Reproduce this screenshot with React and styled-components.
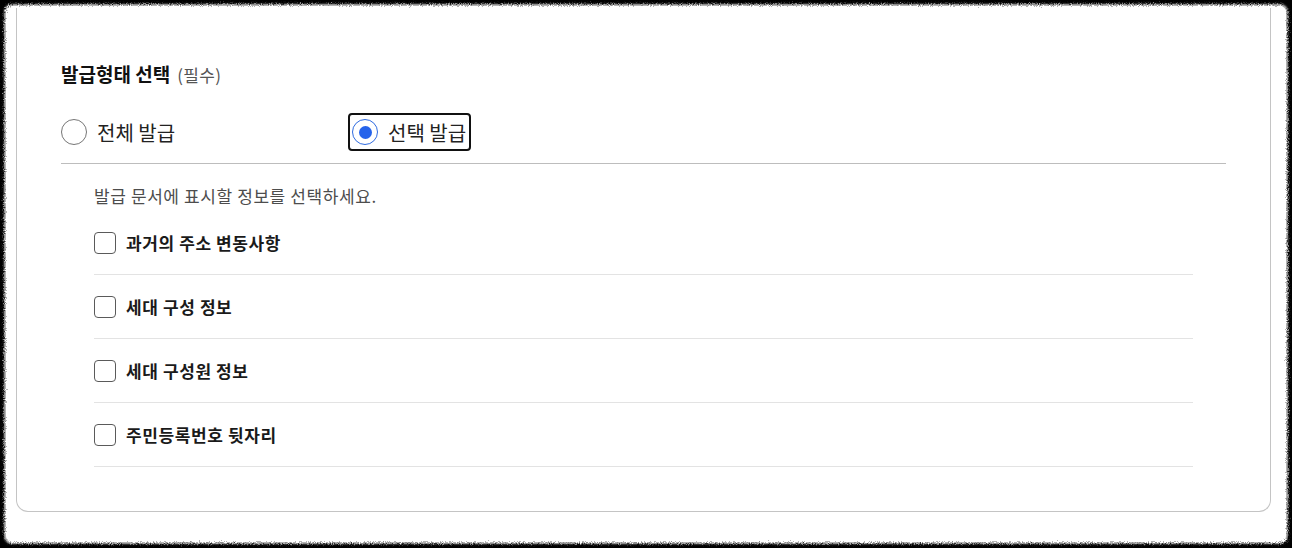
import React, { useState } from "react";
import styled, { createGlobalStyle } from "styled-components";

const Global = createGlobalStyle`
  html, body { margin: 0; padding: 0; background: #000; }
  body { font-family: "Noto Sans CJK KR", "Noto Sans", sans-serif; }
  * { box-sizing: border-box; }
`;

const Frame = styled.div`
  position: relative;
  margin: 8px;
  width: 1276px;
  height: 532px;
  padding: 0 13px 28px 8px;
  display: flex;
  &::before {
    content: "";
    position: absolute;
    inset: -2px;
    background: #fff;
    border-radius: 6px;
    box-shadow: 0 0 2px 2px #bdbdbd;
    filter: url(#rough);
    z-index: 0;
  }
`;

const Card = styled.section`
  position: relative;
  z-index: 1;
  flex: 1;
  background: #fff;
  border: 1px solid #c4c4c4;
  border-top: none;
  border-radius: 0 0 12px 12px;
  padding: 53px 44px 45px 44px;
  display: flex;
  flex-direction: column;
`;

const Title = styled.h2`
  margin: 0;
  font-size: 19px;
  line-height: 26px;
  font-weight: 700;
  color: #111;
`;

const Required = styled.span`
  font-size: 17px;
  font-weight: 400;
  letter-spacing: 0.3px;
  color: #555;
  margin-left: 7px;
`;

const RadioGroup = styled.div`
  display: grid;
  grid-template-columns: 287px 287px;
  margin-top: 25px;
  padding-bottom: 12px;
  border-bottom: 1px solid #bdbdbd;
  & > :first-child {
    margin-left: -4px;
  }
`;

const RadioOption = styled.label`
  justify-self: start;
  display: flex;
  align-items: center;
  gap: 10px;
  height: 38px;
  padding: 0 3px 0 2px;
  border: 2px solid ${(p) => (p.$focused ? "#111" : "transparent")};
  border-radius: 4px;
  cursor: pointer;
  font-size: 20px;
  color: #222;
`;

const RadioCircle = styled.span`
  width: 26px;
  height: 26px;
  border-radius: 50%;
  border: 1px solid ${(p) => (p.$checked ? "#2f6be0" : "#767676")};
  display: flex;
  align-items: center;
  justify-content: center;
  flex-shrink: 0;
  &::after {
    content: "";
    width: 13px;
    height: 13px;
    border-radius: 50%;
    background: #2563eb;
    display: ${(p) => (p.$checked ? "block" : "none")};
  }
`;

const Section = styled.div`
  padding: 20px 33px 0 33px;
  display: flex;
  flex-direction: column;
`;

const Hint = styled.p`
  margin: 0 0 3px;
  font-size: 17px;
  letter-spacing: 0.6px;
  line-height: 24px;
  color: #4d4d4d;
`;

const Row = styled.label`
  display: flex;
  align-items: center;
  gap: 10px;
  height: 64px;
  border-bottom: 1px solid #e3e3e3;
  cursor: pointer;
  font-size: 17px;
  letter-spacing: 0.6px;
  font-weight: 700;
  color: #1a1a1a;
`;

const Box = styled.span`
  width: 22px;
  height: 22px;
  border: 1px solid #5a5a5a;
  border-radius: 4px;
  background: ${(p) => (p.$checked ? "#2563eb" : "#fff")};
  flex-shrink: 0;
`;

const Hidden = styled.input`
  display: none;
`;

const items = ["과거의 주소 변동사항", "세대 구성 정보", "세대 구성원 정보", "주민등록번호 뒷자리"];

export default function App() {
  const [mode, setMode] = useState("select");
  const [checked, setChecked] = useState({});
  return (
    <>
      <Global />
      <svg width="0" height="0" style={{ position: "absolute" }}>
        <filter id="rough">
          <feTurbulence type="fractalNoise" baseFrequency="0.9" numOctaves="2" result="n" />
          <feDisplacementMap in="SourceGraphic" in2="n" scale="5" />
        </filter>
      </svg>
      <Frame>
        <Card>
          <Title>
            발급형태 선택<Required>(필수)</Required>
          </Title>
          <RadioGroup>
            <RadioOption onClick={() => setMode("all")} $focused={false}>
              <RadioCircle $checked={mode === "all"} />
              전체 발급
            </RadioOption>
            <RadioOption onClick={() => setMode("select")} $focused={true}>
              <RadioCircle $checked={mode === "select"} />
              선택 발급
            </RadioOption>
          </RadioGroup>
          <Section>
            <Hint>발급 문서에 표시할 정보를 선택하세요.</Hint>
            {items.map((t) => (
              <Row key={t}>
                <Hidden
                  type="checkbox"
                  checked={!!checked[t]}
                  onChange={() => setChecked((c) => ({ ...c, [t]: !c[t] }))}
                />
                <Box $checked={!!checked[t]} />
                {t}
              </Row>
            ))}
          </Section>
        </Card>
      </Frame>
    </>
  );
}
